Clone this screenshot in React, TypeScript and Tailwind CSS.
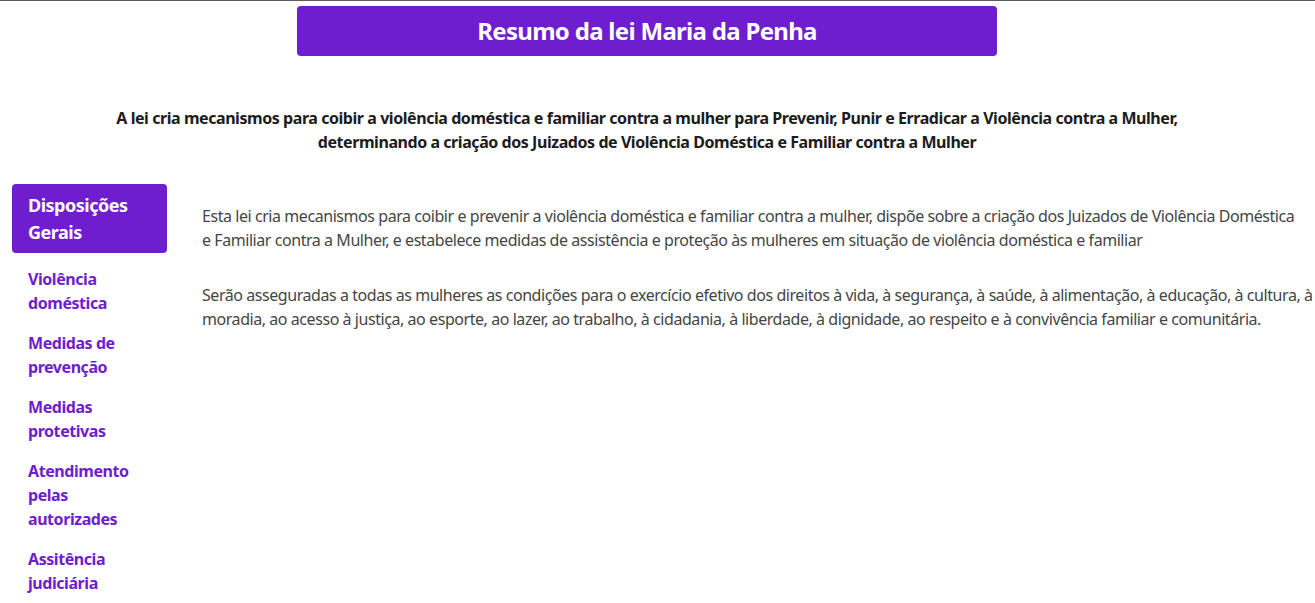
import React from "react";

const links = [
  "Violência doméstica",
  "Medidas de prevenção",
  "Medidas protetivas",
  "Atendimento pelas autorizades",
  "Assitência judiciária",
];

const App = () => {
  return (
    <div className="min-h-screen bg-white border-t border-[#5c5c5c] font-['Noto_Sans',sans-serif] tracking-[-0.44px]">
      <div className="pr-[21px] pt-[5px] flex justify-center">
        <h1 className="w-[700px] h-[50px] flex items-center justify-center bg-[#6e1dcf] rounded text-white text-2xl font-bold tracking-[-0.7px]">
          Resumo da lei Maria da Penha
        </h1>
      </div>

      <p className="pr-[21px] mt-[50px] text-center text-base leading-6 font-bold text-[#1c1c1c]">
        A lei cria mecanismos para coibir a violência doméstica e familiar contra a mulher para Prevenir, Punir e Erradicar a Violência contra a Mulher,
        <br />
        determinando a criação dos Juizados de Violência Doméstica e Familiar contra a Mulher
      </p>

      <div className="flex mt-[30px]">
        <aside className="ml-3 w-[155px] shrink-0">
          <div className="bg-[#6e1dcf] rounded px-4 py-2 text-white text-lg font-bold leading-[26.5px] tracking-[-0.5px]">
            Disposições Gerais
          </div>
          <ul className="mt-[14px] flex flex-col gap-4 px-4">
            {links.map((l) => (
              <li key={l}>
                <a href="#" className="text-[#6e1dcf] text-base font-bold leading-6">
                  {l}
                </a>
              </li>
            ))}
          </ul>
        </aside>

        <main className="ml-[35px] w-[1112px] mt-5 text-base leading-6 text-[#454545]">
          <p className="mb-[31px]">
            Esta lei cria mecanismos para coibir e prevenir a violência doméstica e familiar contra a mulher, dispõe sobre a criação dos Juizados de Violência Doméstica
            <br />
            e Familiar contra a Mulher, e estabelece medidas de assistência e proteção às mulheres em situação de violência doméstica e familiar
          </p>
          <p>
            Serão asseguradas a todas as mulheres as condições para o exercício efetivo dos direitos à vida, à segurança, à saúde, à alimentação, à educação, à cultura, à moradia, ao acesso à justiça, ao esporte, ao lazer, ao trabalho, à cidadania, à liberdade, à dignidade, ao respeito e à convivência familiar e comunitária.
          </p>
        </main>
      </div>
    </div>
  );
};

export default App;
